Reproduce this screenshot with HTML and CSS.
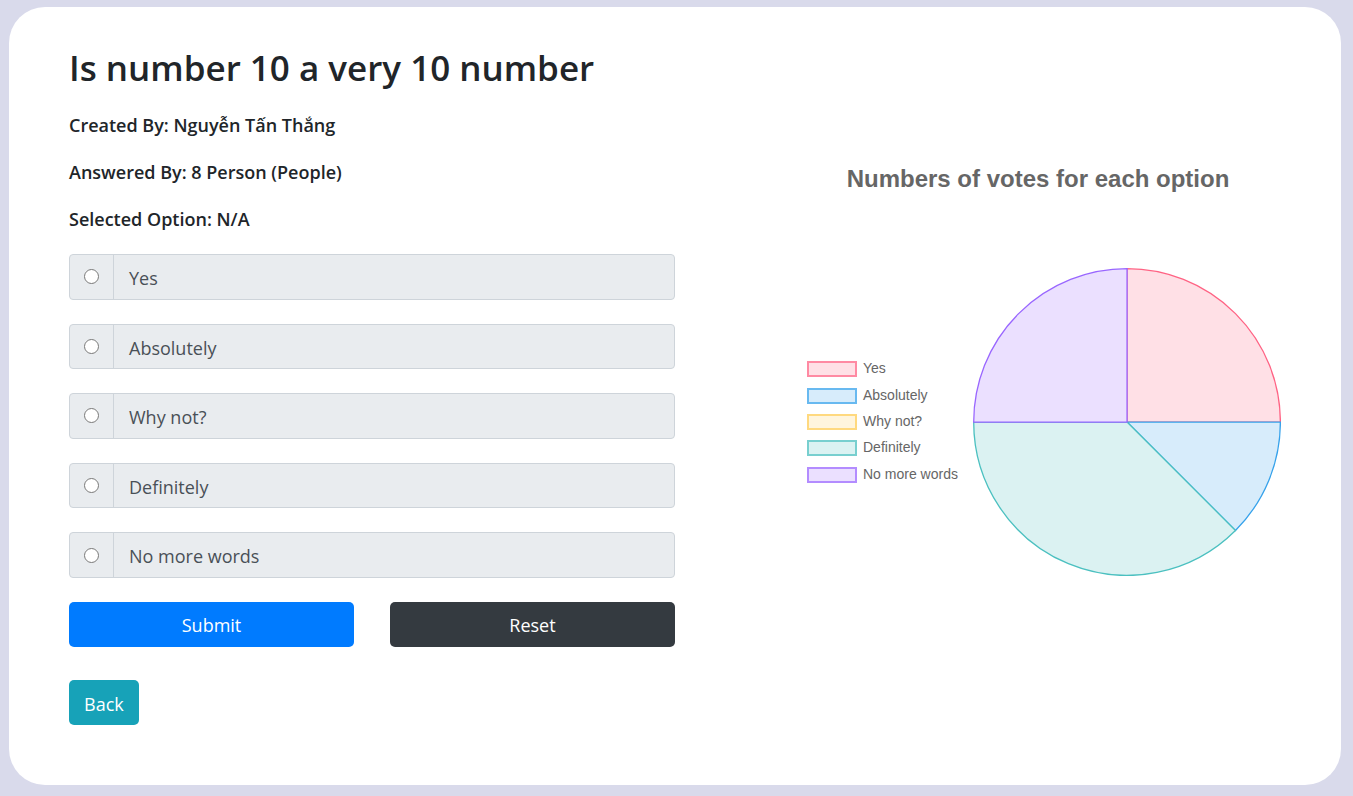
FILE: index.html
```html
<!DOCTYPE html>
<html lang="en">
<head>
<meta charset="utf-8">
<title>Poll</title>
<link rel="stylesheet" href="styles.css">
</head>
<body>
<main class="card">
  <section class="poll">
    <h1>Is number 10 a very 10 number</h1>
    <h2>Created By: Nguyễn Tấn Thắng</h2>
    <h2>Answered By: 8 Person (People)</h2>
    <h2>Selected Option: N/A</h2>
    <form>
      <div class="options">
        <label class="option"><span class="pick"><input type="radio" name="vote"></span><span class="text">Yes</span></label>
        <label class="option"><span class="pick"><input type="radio" name="vote"></span><span class="text">Absolutely</span></label>
        <label class="option"><span class="pick"><input type="radio" name="vote"></span><span class="text">Why not?</span></label>
        <label class="option"><span class="pick"><input type="radio" name="vote"></span><span class="text">Definitely</span></label>
        <label class="option"><span class="pick"><input type="radio" name="vote"></span><span class="text">No more words</span></label>
      </div>
      <div class="actions">
        <button class="btn submit" type="submit">Submit</button>
        <button class="btn reset" type="reset">Reset</button>
      </div>
    </form>
    <a class="btn back" href="#">Back</a>
  </section>
  <section class="chart">
    <h3>Numbers of votes for each option</h3>
    <div class="plot">
      <ul class="legend">
        <li><span class="swatch red"></span><span class="name">Yes</span></li>
        <li><span class="swatch blue"></span><span class="name">Absolutely</span></li>
        <li><span class="swatch yellow"></span><span class="name">Why not?</span></li>
        <li><span class="swatch teal"></span><span class="name">Definitely</span></li>
        <li><span class="swatch purple"></span><span class="name">No more words</span></li>
      </ul>
      <svg class="pie" viewBox="0 0 308 308" role="img" aria-label="Votes pie chart">
        <path class="slice-red" d="M154 154V.7A153.3 153.3 0 0 1 307.3 154Z"/>
        <path class="slice-blue" d="M154 154H307.3A153.3 153.3 0 0 1 262.4 262.4Z"/>
        <path class="slice-teal" d="M154 154L262.4 262.4A153.3 153.3 0 0 1 .7 154Z"/>
        <path class="slice-purple" d="M154 154H.7A153.3 153.3 0 0 1 154 .7Z"/>
      </svg>
    </div>
  </section>
</main>
</body>
</html>
```
FILE: styles.css
```css
* { box-sizing: border-box; }
body {
  margin: 0;
  padding: 7px 12px 11px 9px;
  min-height: 100vh;
  display: flex;
  background: #d9daeb;
  color: #212529;
  font-family: "Segoe UI", "Open Sans", "Noto Sans", sans-serif;
}
.card {
  flex: 1;
  display: grid;
  grid-template-columns: 606fr 474fr;
  column-gap: 132px;
  padding: 36px 60px;
  border-radius: 36px;
  background: #fff;
}
h1 { margin: 0 0 20px; font-size: 35px; line-height: 50px; font-weight: 600; white-space: nowrap; }
h2 { margin: 0 0 23px; font-size: 18px; line-height: 24px; font-weight: 600; }
.options {
  display: grid;
  grid-auto-rows: 1fr;
  gap: 24px;
  min-height: 324px;
  margin-bottom: 24px;
}
.option {
  display: flex;
  border: 1px solid #ced4da;
  border-radius: 4px;
  background: #e9ecef;
}
.pick { display: flex; align-items: center; padding: 0 14px; border-right: 1px solid #ced4da; }
.pick input { width: 15px; height: 15px; margin: 0; }
.text { padding: 3px 15px 0; font-size: 18px; line-height: 40px; color: #495057; }
.actions { display: grid; grid-template-columns: 1fr 1fr; column-gap: 36px; }
.btn { height: 45px; padding: 1px 15px 0; border: 0; border-radius: 5px; color: #fff; font: 18px/45px "Segoe UI", "Open Sans", sans-serif; text-decoration: none; }
.submit { background: #007bff; }
.reset { background: #343a40; }
.back { display: inline-block; margin-top: 33px; background: #17a2b8; line-height: 46px; }
.chart { font-family: "Liberation Sans", Arial, sans-serif; color: #666; padding-top: 120px; }
h3 { margin: 0 0 73px; padding-right: 12px; font-size: 24px; line-height: 32px; text-align: center; }
.plot { display: flex; align-items: center; gap: 15px; }
.legend { flex: none; display: grid; grid-auto-rows: 1fr; min-height: 132px; margin: 0; padding: 0; list-style: none; font-size: 14px; }
.legend li { display: flex; align-items: center; gap: 6px; white-space: nowrap; }
.name { padding-bottom: 2px; }
.swatch { width: 50px; height: 16px; border: 2px solid; }
.red { background: #ffe0e6; border-color: #ff8aa3; }
.blue { background: #d7ecfb; border-color: #68b9f0; }
.yellow { background: #fff5dd; border-color: #ffd97f; }
.teal { background: #dbf2f2; border-color: #78cfcf; }
.purple { background: #ebe0ff; border-color: #b38cff; }
.pie { flex: 1; min-width: 0; stroke-width: 1.3; }
.slice-red { fill: #ffe0e6; stroke: #ff6384; }
.slice-blue { fill: #d7ecfb; stroke: #36a2eb; }
.slice-teal { fill: #dbf2f2; stroke: #4bc0c0; }
.slice-purple { fill: #ebe0ff; stroke: #9966ff; }
```
